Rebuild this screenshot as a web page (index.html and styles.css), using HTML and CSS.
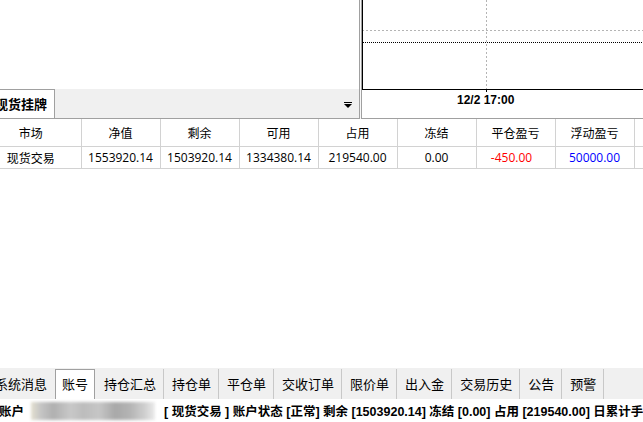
FILE: index.html
```html
<!DOCTYPE html>
<html lang="zh-CN">
<head>
<meta charset="utf-8">
<title>账号</title>
<link rel="stylesheet" href="styles.css">
</head>
<body>
<div class="app">
  <div class="top">
    <div class="left-pane">
      <div class="left-body"></div>
      <div class="top-tabs">
        <div class="top-tab">现货挂牌</div>
        <div class="dropdown">
          <svg width="8" height="6" viewBox="0 0 8 6"><rect x="0" y="0" width="8" height="1" fill="#000"/><path d="M0 2 H8 L4 6 Z" fill="#000"/></svg>
        </div>
      </div>
    </div>
    <div class="splitter"></div>
    <div class="chart-pane">
      <svg class="plot" width="281" height="92" viewBox="0 0 281 92">
        <line x1="0" y1="30.5" x2="281" y2="30.5" stroke="#b4b4b4" stroke-width="1" stroke-dasharray="2 2"/>
        <line x1="1" y1="42.5" x2="281" y2="42.5" stroke="#000" stroke-width="1" stroke-dasharray="1 1"/>
        <line x1="124.5" y1="0" x2="124.5" y2="89" stroke="#b4b4b4" stroke-width="1" stroke-dasharray="2 2"/>
        <line x1="124.5" y1="89" x2="124.5" y2="92" stroke="#000" stroke-width="1"/>
        <line x1="0.5" y1="0" x2="0.5" y2="89.5" stroke="#000" stroke-width="1"/>
        <line x1="0" y1="89.5" x2="281" y2="89.5" stroke="#000" stroke-width="1"/>
      </svg>
      <div class="axis-label">12/2 17:00</div>
    </div>
  </div>

  <table class="grid">
    <colgroup>
      <col class="c-first"><col class="c"><col class="c"><col class="c"><col class="c"><col class="c"><col class="c"><col class="c"><col class="c-last">
    </colgroup>
    <thead>
      <tr>
        <th class="first">市场</th><th>净值</th><th>剩余</th><th>可用</th><th>占用</th><th>冻结</th><th>平仓盈亏</th><th>浮动盈亏</th><th></th>
      </tr>
    </thead>
    <tbody>
      <tr>
        <td class="first">现货交易</td><td>1553920.14</td><td>1503920.14</td><td>1334380.14</td><td>219540.00</td><td>0.00</td><td class="neg">-450.00</td><td class="pos">50000.00</td><td></td>
      </tr>
    </tbody>
  </table>

  <div class="spacer"></div>

  <div class="bottom-tabs">
    <div class="tab first-tab">系统消息</div>
    <div class="tab active">账号</div>
    <div class="tab">持仓汇总</div>
    <div class="tab">持仓单</div>
    <div class="tab">平仓单</div>
    <div class="tab">交收订单</div>
    <div class="tab">限价单</div>
    <div class="tab">出入金</div>
    <div class="tab">交易历史</div>
    <div class="tab">公告</div>
    <div class="tab">预警</div>
  </div>

  <div class="status">
    <span class="acct">账户</span>
    <span class="blur"></span>
    <span class="info">[ 现货交易 ] 账户状态 [正常] 剩余 [1503920.14] 冻结 [0.00] 占用 [219540.00] 日累计手续费 [0.00]</span>
  </div>
</div>
</body>
</html>
```

FILE: styles.css
```css
* { box-sizing: border-box; }
html, body { margin: 0; padding: 0; background: #fff; }
body {
  width: 643px;
  height: 422px;
  overflow: hidden;
  font-family: "Open Sans", "Noto Sans CJK SC", sans-serif;
  color: #000;
}
.app {
  display: flex;
  flex-direction: column;
  height: 422px;
}

/* top area */
.top {
  display: flex;
  height: 119px;
  flex: none;
}
.left-pane {
  width: 359px;
  display: flex;
  flex-direction: column;
}
.left-body { height: 89px; background: #fff; }
.top-tabs {
  height: 30px;
  background: #f0f0f0;
  border-bottom: 1px solid #a0a0a0;
  display: flex;
  justify-content: space-between;
  align-items: stretch;
}
.top-tab {
  width: 66px;
  margin-left: -11px;
  padding-left: 6px;
  background: #fff;
  border-top: 1px solid #a0a0a0;
  border-right: 1px solid #a0a0a0;
  font-family: "Noto Sans CJK SC", sans-serif;
  font-weight: bold;
  font-size: 13px;
  line-height: 28px;
  white-space: nowrap;
  overflow: hidden;
}
.dropdown {
  width: 20px;
  display: flex;
  align-items: center;
  justify-content: center;
  padding-top: 2px;
  padding-right: 3px;
}
.splitter {
  width: 3px;
  border-left: 1px solid #a0a0a0;
  border-right: 1px solid #a0a0a0;
  background: #f8f8f8;
}
.chart-pane {
  flex: 1;
  display: flex;
  flex-direction: column;
  border-bottom: 1px solid #a0a0a0;
}
.plot { display: block; flex: none; }
.axis-label {
  padding-left: 95px;
  font-family: "Liberation Sans", Arial, sans-serif;
  font-weight: bold;
  font-size: 12px;
  line-height: 14px;
  margin-top: 1px;
}

/* table */
.grid {
  border-collapse: collapse;
  table-layout: fixed;
  width: 660px;
  flex: none;
  font-size: 12px;
}
.grid col.c-first { width: 81px; }
.grid col.c { width: 79px; }
.grid col.c-last { width: 26px; }
.grid th, .grid td {
  border: 1px solid #d2d2d2;
  text-align: center;
  font-weight: normal;
  white-space: nowrap;
  padding: 0;
  overflow: hidden;
}
.grid thead tr { height: 27px; }
.grid tbody tr { height: 22px; }
.grid th { border-top: 1px solid #fff; }
.grid .first { border-left: none; padding-right: 19px; }
.grid .neg { color: #ff0000; padding-right: 8px; }
.grid .pos { color: #0000ff; }

.spacer { flex: 1; }

/* bottom tabs */
.bottom-tabs {
  height: 31px;
  flex: none;
  background: #f0f0f0;
  display: flex;
  align-items: stretch;
  padding-top: 1px;
  overflow: hidden;
  font-family: "Noto Sans CJK SC", sans-serif;
  font-size: 13px;
}
.tab {
  padding: 0 7px 0 8px;
  line-height: 29px;
  border-right: 1px solid #c8c8c8;
  white-space: nowrap;
  flex: none;
}
.tab.first-tab {
  margin-left: -13px;
  margin-right: 1px;
  border-right: none;
}
.tab.active {
  background: #fff;
  border: 1px solid #a0a0a0;
  border-bottom: none;
  padding: 0 6px;
  line-height: 28px;
  margin-right: 1px;
}

/* status line */
.status {
  height: 23px;
  flex: none;
  display: flex;
  align-items: center;
  white-space: nowrap;
  overflow: hidden;
  font-family: "Liberation Sans", "Noto Sans CJK SC", sans-serif;
  font-weight: bold;
  font-size: 12.5px;
}
.acct { margin-left: -1px; }
.blur {
  display: inline-block;
  width: 124px;
  height: 18px;
  margin: 0 9px 0 7px;
  background: linear-gradient(90deg, #e4e0d0 0%, #c4c4c4 8%, #b0b0b0 18%, #c8c8c8 32%, #bcbcbc 42%, #c6c6c6 55%, #a8a8a8 68%, #b4b4b4 80%, #d0d0d0 92%, #ececec 100%);
  filter: blur(1.5px);
  flex: none;
}
.info { flex: none; }
```
